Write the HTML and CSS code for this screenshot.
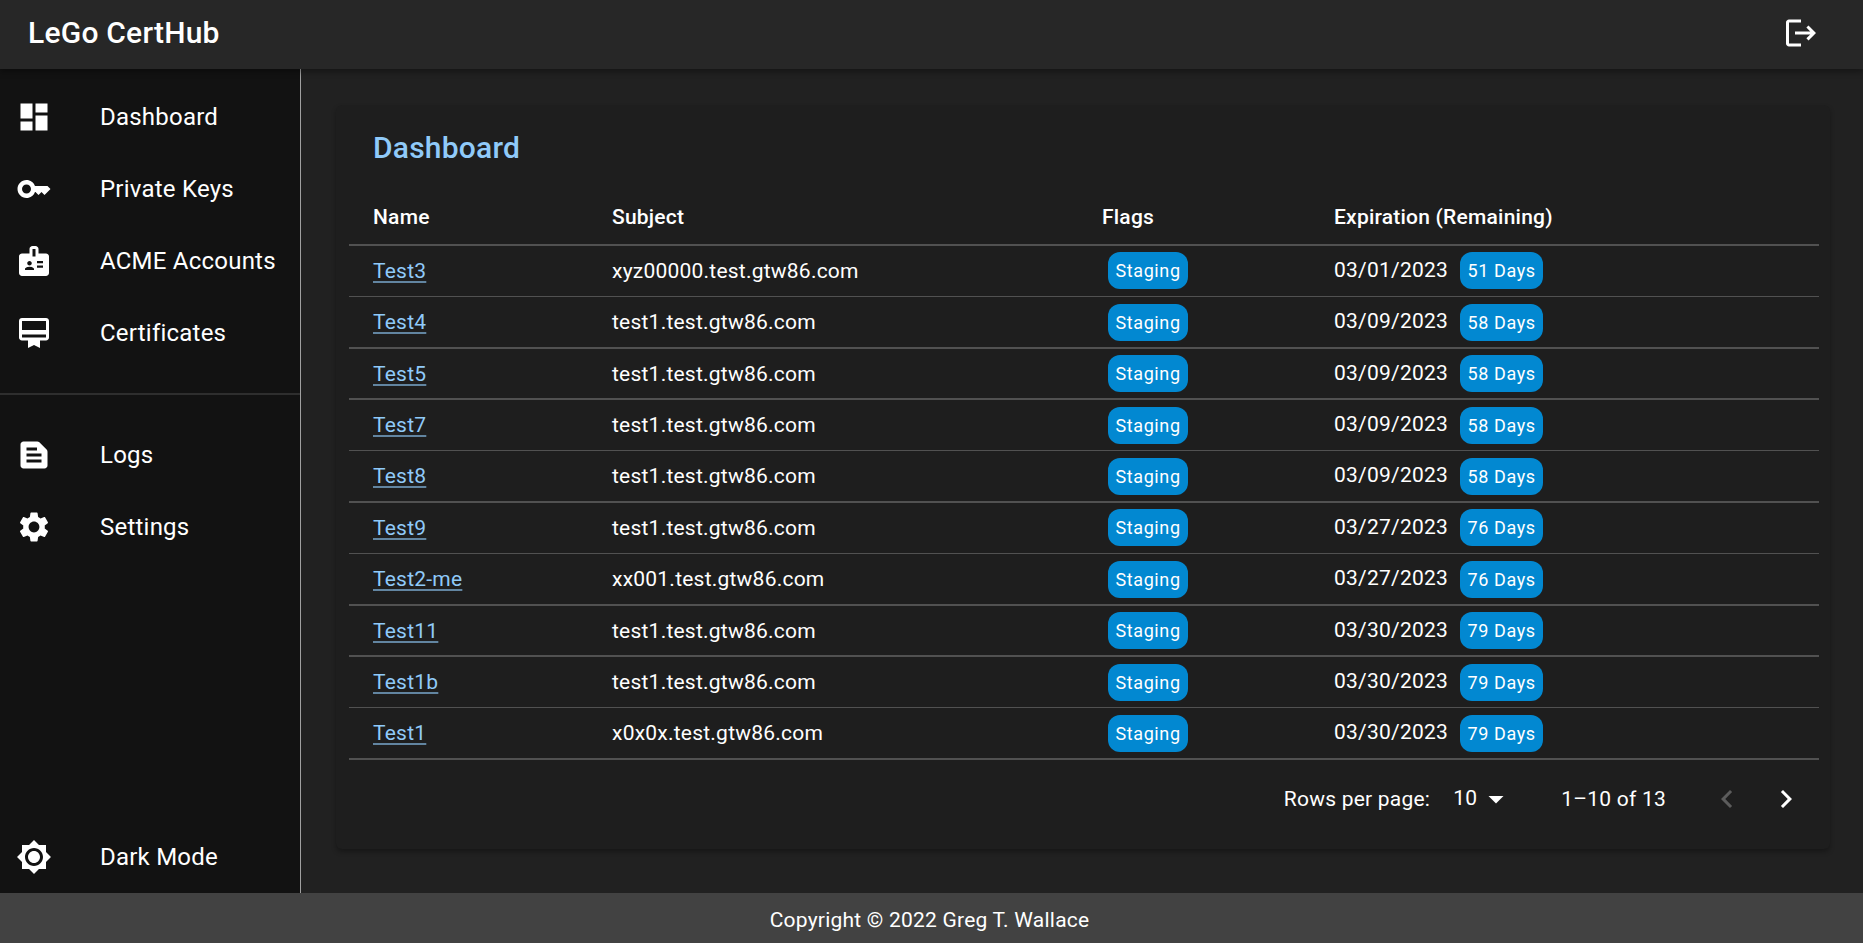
FILE: index.html
```html
<!DOCTYPE html>
<html>
<head>
	<meta charset="utf-8">
	<title>LeGo CertHub</title>
	<link rel="stylesheet" href="styles.css">
</head>
<body>
	<header class="topbar">
		<div class="brand">LeGo CertHub</div>
		<svg class="icon logout" viewBox="0 0 24 24"><path d="M17 7l-1.41 1.41L18.17 11H8v2h10.17l-2.58 2.58L17 17l5-5zM4 5h8V3H4c-1.1 0-2 .9-2 2v14c0 1.1.9 2 2 2h8v-2H4V5z"/></svg>
	</header>
	<div class="middle">
		<nav class="sidebar">
			<ul class="menu">
				<li><svg class="icon" viewBox="0 0 24 24"><path d="M3 13h8V3H3v10zm0 8h8v-6H3v6zm10 0h8V11h-8v10zm0-18v6h8V3h-8z"/></svg><span>Dashboard</span></li>
				<li><svg class="icon" viewBox="0 0 24 24"><path d="M21 10h-8.35C11.83 7.67 9.61 6 7 6c-3.31 0-6 2.69-6 6s2.69 6 6 6c2.61 0 4.83-1.67 5.65-4H13l2 2 2-2 2 2 4-4.04L21 10zM7 15c-1.65 0-3-1.35-3-3s1.35-3 3-3 3 1.35 3 3-1.35 3-3 3z"/></svg><span>Private Keys</span></li>
				<li><svg class="icon" viewBox="0 0 24 24"><path d="M20 7h-5V4c0-1.1-.9-2-2-2h-2c-1.1 0-2 .9-2 2v3H4c-1.1 0-2 .9-2 2v11c0 1.1.9 2 2 2h16c1.1 0 2-.9 2-2V9c0-1.1-.9-2-2-2zM9 12c.83 0 1.5.67 1.5 1.5S9.83 15 9 15s-1.5-.67-1.5-1.5S8.17 12 9 12zm3 6H6v-.75c0-1 2-1.5 3-1.5s3 .5 3 1.5V18zm1-9h-2V4h2v5zm5 7.5h-4V15h4v1.5zm0-3h-4V12h4v1.5z"/></svg><span>ACME Accounts</span></li>
				<li><svg class="icon" viewBox="0 0 24 24"><path d="M20 2H4c-1.11 0-2 .89-2 2v11c0 1.11.89 2 2 2h4v5l4-2 4 2v-5h4c1.11 0 2-.89 2-2V4c0-1.11-.89-2-2-2zm0 13H4v-2h16v2zm0-5H4V4h16v6z"/></svg><span>Certificates</span></li>
			</ul>
			<div class="divider"></div>
			<ul class="menu">
				<li><svg class="icon" viewBox="0 0 24 24"><path d="M20.41 8.41l-4.83-4.83c-.37-.37-.88-.58-1.41-.58H5c-1.1 0-2 .9-2 2v14c0 1.1.9 2 2 2h14c1.1 0 2-.9 2-2V9.83c0-.53-.21-1.04-.59-1.42zM7 7h7v2H7V7zm10 10H7v-2h10v2zm0-4H7v-2h10v2z"/></svg><span>Logs</span></li>
				<li><svg class="icon" viewBox="0 0 24 24"><path d="M19.14 12.94c.04-.3.06-.61.06-.94 0-.32-.02-.64-.07-.94l2.03-1.58c.18-.14.23-.41.12-.61l-1.92-3.32c-.12-.22-.37-.29-.59-.22l-2.39.96c-.5-.38-1.03-.7-1.62-.94l-.36-2.54c-.04-.24-.24-.41-.48-.41h-3.84c-.24 0-.43.17-.47.41l-.36 2.54c-.59.24-1.13.57-1.62.94l-2.39-.96c-.22-.08-.47 0-.59.22L2.74 8.87c-.12.21-.08.47.12.61l2.03 1.58c-.05.3-.09.63-.09.94s.02.64.07.94l-2.03 1.58c-.18.14-.23.41-.12.61l1.92 3.32c.12.22.37.29.59.22l2.39-.96c.5.38 1.03.7 1.62.94l.36 2.54c.05.24.24.41.48.41h3.84c.24 0 .44-.17.47-.41l.36-2.54c.59-.24 1.13-.56 1.62-.94l2.39.96c.22.08.47 0 .59-.22l1.92-3.32c.12-.22.07-.47-.12-.61l-2.01-1.58zM12 15.6c-1.98 0-3.6-1.62-3.6-3.6s1.62-3.6 3.6-3.6 3.6 1.62 3.6 3.6-1.62 3.6-3.6 3.6z"/></svg><span>Settings</span></li>
			</ul>
			<ul class="menu bottom">
				<li><svg class="icon" viewBox="0 0 24 24"><path d="M20 8.69V4h-4.69L12 .69 8.69 4H4v4.69L.69 12 4 15.31V20h4.69L12 23.31 15.31 20H20v-4.69L23.31 12 20 8.69zM12 18c-3.31 0-6-2.69-6-6s2.69-6 6-6 6 2.69 6 6-2.69 6-6 6zm0-10c-2.21 0-4 1.79-4 4s1.79 4 4 4 4-1.79 4-4-1.79-4-4-4z"/></svg><span>Dark Mode</span></li>
			</ul>
		</nav>
		<main class="content">
			<section class="card">
				<h1 class="title">Dashboard</h1>
				<div class="table">
					<div class="row head">
						<div class="cell">Name</div>
						<div class="cell">Subject</div>
						<div class="cell">Flags</div>
						<div class="cell">Expiration (Remaining)</div>
					</div>
					<div class="line"></div>
					<div class="row">
						<div class="cell"><a href="#">Test3</a></div>
						<div class="cell">xyz00000.test.gtw86.com</div>
						<div class="cell"><span class="chip flag">Staging</span></div>
						<div class="cell"><span class="date">03/01/2023</span><span class="chip days">51 Days</span></div>
					</div>
					<div class="line"></div>
					<div class="row">
						<div class="cell"><a href="#">Test4</a></div>
						<div class="cell">test1.test.gtw86.com</div>
						<div class="cell"><span class="chip flag">Staging</span></div>
						<div class="cell"><span class="date">03/09/2023</span><span class="chip days">58 Days</span></div>
					</div>
					<div class="line"></div>
					<div class="row">
						<div class="cell"><a href="#">Test5</a></div>
						<div class="cell">test1.test.gtw86.com</div>
						<div class="cell"><span class="chip flag">Staging</span></div>
						<div class="cell"><span class="date">03/09/2023</span><span class="chip days">58 Days</span></div>
					</div>
					<div class="line"></div>
					<div class="row">
						<div class="cell"><a href="#">Test7</a></div>
						<div class="cell">test1.test.gtw86.com</div>
						<div class="cell"><span class="chip flag">Staging</span></div>
						<div class="cell"><span class="date">03/09/2023</span><span class="chip days">58 Days</span></div>
					</div>
					<div class="line"></div>
					<div class="row">
						<div class="cell"><a href="#">Test8</a></div>
						<div class="cell">test1.test.gtw86.com</div>
						<div class="cell"><span class="chip flag">Staging</span></div>
						<div class="cell"><span class="date">03/09/2023</span><span class="chip days">58 Days</span></div>
					</div>
					<div class="line"></div>
					<div class="row">
						<div class="cell"><a href="#">Test9</a></div>
						<div class="cell">test1.test.gtw86.com</div>
						<div class="cell"><span class="chip flag">Staging</span></div>
						<div class="cell"><span class="date">03/27/2023</span><span class="chip days">76 Days</span></div>
					</div>
					<div class="line"></div>
					<div class="row">
						<div class="cell"><a href="#">Test2-me</a></div>
						<div class="cell">xx001.test.gtw86.com</div>
						<div class="cell"><span class="chip flag">Staging</span></div>
						<div class="cell"><span class="date">03/27/2023</span><span class="chip days">76 Days</span></div>
					</div>
					<div class="line"></div>
					<div class="row">
						<div class="cell"><a href="#">Test11</a></div>
						<div class="cell">test1.test.gtw86.com</div>
						<div class="cell"><span class="chip flag">Staging</span></div>
						<div class="cell"><span class="date">03/30/2023</span><span class="chip days">79 Days</span></div>
					</div>
					<div class="line"></div>
					<div class="row">
						<div class="cell"><a href="#">Test1b</a></div>
						<div class="cell">test1.test.gtw86.com</div>
						<div class="cell"><span class="chip flag">Staging</span></div>
						<div class="cell"><span class="date">03/30/2023</span><span class="chip days">79 Days</span></div>
					</div>
					<div class="line"></div>
					<div class="row">
						<div class="cell"><a href="#">Test1</a></div>
						<div class="cell">x0x0x.test.gtw86.com</div>
						<div class="cell"><span class="chip flag">Staging</span></div>
						<div class="cell"><span class="date">03/30/2023</span><span class="chip days">79 Days</span></div>
					</div>
					<div class="line"></div>
				</div>
				<div class="pager">
					<span class="rows-label">Rows per page:</span>
					<span class="rows-value">10</span>
					<svg class="icon caret" viewBox="0 0 24 24"><path d="M7 10l5 5 5-5z"/></svg>
					<span class="range">1–10 of 13</span>
					<svg class="icon prev" viewBox="0 0 24 24"><path d="M15.41 16.59L10.83 12l4.58-4.59L14 6l-6 6 6 6 1.41-1.41z"/></svg>
					<svg class="icon next" viewBox="0 0 24 24"><path d="M8.59 16.59L13.17 12 8.59 7.41 10 6l6 6-6 6-1.41-1.41z"/></svg>
				</div>
			</section>
		</main>
	</div>
	<footer class="footer">Copyright © 2022 Greg T. Wallace</footer>
</body>
</html>
```

FILE: styles.css
```css
* {
	padding: 0;
	margin: 0;
	box-sizing: border-box;
}
html, body {
	height: 100%;
}
body {
	display: flex;
	flex-direction: column;
	overflow: hidden;
	background-color: #212121;
	color: #fff;
	font-family: Roboto, "Liberation Sans", sans-serif;
	font-size: 21px;
	letter-spacing: 0.225px;
}
ul {
	list-style: none;
}
.icon {
	display: block;
	flex: none;
	width: 36px;
	height: 36px;
	fill: #fff;
}

/* top bar */
.topbar {
	flex: none;
	height: 69px;
	padding: 0 44px 4px 28px;
	display: flex;
	align-items: center;
	justify-content: space-between;
	position: relative;
	background-color: #272727;
	box-shadow: 0 3px 6px rgba(0, 0, 0, 0.35);
}
.brand {
	font-size: 30px;
	font-weight: 500;
}

/* sidebar */
.middle {
	flex: 1;
	display: flex;
	min-height: 0;
}
.sidebar {
	flex: none;
	width: 301px;
	padding: 12px 0 0;
	display: flex;
	flex-direction: column;
	background-color: #121212;
	border-right: 1px solid #a0a0a0;
}
.menu li {
	height: 72px;
	padding-left: 16px;
	display: flex;
	align-items: center;
	font-size: 24px;
}
.menu li span {
	margin-left: 48px;
}
.divider {
	height: 2px;
	margin: 24px 0;
	background-color: #2e2e2e;
}
.bottom {
	margin-top: auto;
}

/* main card */
.content {
	flex: 1;
	min-width: 0;
	padding: 36px 33px 44px 35px;
}
.card {
	height: 100%;
	padding: 0 11px 0 13px;
	border-radius: 6px;
	background-color: #1e1e1e;
	box-shadow: 0 3px 5px rgba(0, 0, 0, 0.3);
}
.title {
	padding: 23px 0 0 24px;
	height: 69px;
	font-size: 30px;
	line-height: 40px;
	font-weight: 500;
	color: #90caf9;
}
.row {
	display: grid;
	grid-template-columns: 239px 490px 232px 1fr;
	align-items: center;
	height: 49.9px;
	padding-top: 0.3px;
}
.row.head {
	height: 70.3px;
	padding-top: 16px;
	font-weight: 500;
}
.line {
	height: 1.5px;
	background-color: #515151;
}
.cell {
	display: flex;
	align-items: center;
	padding-left: 24px;
	white-space: nowrap;
}
.cell a {
	color: #90caf9;
	text-decoration: underline;
	text-decoration-color: rgba(144, 202, 249, 0.6);
	text-underline-offset: 3px;
}
.date {
	margin-top: -2px;
}
.chip {
	display: inline-block;
	height: 37px;
	padding: 0 7.5px;
	line-height: 37px;
	border-radius: 12px;
	background-color: #0288d1;
	font-size: 18px;
	letter-spacing: 0.6px;
}
.flag {
	margin-left: 6px;
}
.days {
	margin-left: 12px;
}

/* pagination */
.pager {
	height: 78px;
	padding: 0 15px 0 0;
	display: flex;
	align-items: center;
	justify-content: flex-end;
}
.rows-value {
	margin: -2px 0 0 23px;
}
.caret {
	margin: 0 0 0 1px;
}
.range {
	margin-left: 47px;
}
.prev {
	margin-left: 43px;
	fill: #5c5c5c;
}
.next {
	margin-left: 23px;
}

/* footer */
.footer {
	flex: none;
	height: 50px;
	padding: 4px 4px 0 0;
	display: flex;
	align-items: center;
	justify-content: center;
	background-color: #424242;
}
```
